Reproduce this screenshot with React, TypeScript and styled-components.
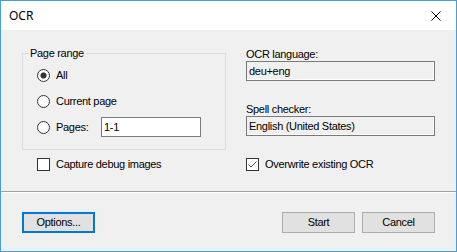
import React from "react";
import styled, { createGlobalStyle } from "styled-components";

const GlobalStyle = createGlobalStyle`
  html, body {
    margin: 0;
    padding: 0;
    background: #f0f0f0;
  }
  * {
    box-sizing: border-box;
  }
`;

const Window = styled.div`
  width: 457px;
  height: 252px;
  border: 1px solid #43a0d9;
  background: #f0f0f0;
  display: flex;
  flex-direction: column;
  font-family: "Liberation Sans", Arial, sans-serif;
  font-size: 11px;
  letter-spacing: -0.3px;
  color: #000;
`;

const TitleBar = styled.div`
  height: 29px;
  flex: none;
  background: #fff;
  display: flex;
  align-items: center;
  justify-content: space-between;
  padding-left: 8px;
`;

const Title = styled.span`
  font-family: "Noto Sans", "Open Sans", sans-serif;
  font-size: 12px;
  letter-spacing: 0;
  line-height: 16px;
  margin-top: 1px;
`;

const CloseButton = styled.div`
  width: 46px;
  height: 29px;
  display: flex;
  align-items: center;
  justify-content: center;
  padding-left: 6px;
`;

const Content = styled.div`
  flex: 1;
  display: flex;
  flex-direction: column;
`;

const Columns = styled.div`
  display: flex;
  gap: 20px;
  padding: 0 21px;
`;

const LeftColumn = styled.div`
  width: 204px;
  flex: none;
`;

const RightColumn = styled.div`
  width: 189px;
  flex: none;
  display: flex;
  flex-direction: column;
`;

const Group = styled.fieldset`
  margin: 17px 0 0 0;
  padding: 2px 0 9px 14px;
  border: 1px solid #dcdcdc;
  min-width: 0;
`;

const Legend = styled.legend`
  padding: 0 2px 0 1px;
  margin-left: -8px;
  line-height: 13px;
`;

const OptionRow = styled.div`
  height: 26px;
  display: flex;
  align-items: center;
`;

const Radio = styled.span<{ $checked?: boolean }>`
  width: 13px;
  height: 13px;
  flex: none;
  border-radius: 50%;
  border: 1px solid #333;
  background: ${(p) =>
    p.$checked ? "radial-gradient(circle, #333 0 2.7px, #fff 3.4px)" : "#fff"};
`;

const OptionLabel = styled.span<{ $width?: number }>`
  margin-left: 6px;
  line-height: 13px;
  width: ${(p) => (p.$width ? `${p.$width}px` : "auto")};
`;

const TextBox = styled.div<{ $readOnly?: boolean }>`
  height: 20px;
  display: flex;
  align-items: center;
  padding-left: 2px;
  line-height: 13px;
  border: 1px solid #7a7a7a;
  background: ${(p) => (p.$readOnly ? "#f0f0f0" : "#fff")};
  box-shadow: ${(p) => (p.$readOnly ? "inset -1px -1px 0 #fff" : "none")};
`;

const PagesBox = styled(TextBox)`
  width: 100px;
`;

const FieldLabel = styled.div<{ $top: number }>`
  margin-top: ${(p) => p.$top}px;
  height: 13px;
  line-height: 13px;
`;

const CheckRow = styled.div`
  display: flex;
  gap: 20px;
  padding: 0 21px;
  margin-top: 8px;
`;

const CheckCell = styled.div<{ $width: number; $indent?: number }>`
  width: ${(p) => p.$width}px;
  padding-left: ${(p) => p.$indent ?? 0}px;
  display: flex;
  align-items: center;
  height: 13px;
`;

const CheckBox = styled.span`
  width: 13px;
  height: 13px;
  flex: none;
  border: 1px solid #333;
  background: #fff;
  display: flex;
  align-items: center;
  justify-content: center;
`;

const Separator = styled.div`
  margin-top: 20px;
  height: 2px;
  border-top: 1px solid #a0a0a0;
  border-bottom: 1px solid #fff;
`;

const ButtonRow = styled.div`
  margin-top: 19px;
  padding: 0 21px;
  display: flex;
  align-items: center;
`;

const Button = styled.div<{ $focused?: boolean }>`
  width: 73px;
  height: 21px;
  display: flex;
  align-items: center;
  justify-content: center;
  background: #e1e1e1;
  border: ${(p) => (p.$focused ? "2px solid #0078d7" : "1px solid #adadad")};
  line-height: 13px;
`;

const Spacer = styled.div`
  flex: 1;
`;

const ButtonGap = styled.div`
  width: 7px;
`;

function CheckMark(): React.ReactElement {
  return (
    <svg width="11" height="11" viewBox="0 0 11 11">
      <path d="M1.5 5.5 L4 8 L9.5 2.5" fill="none" stroke="#444" strokeWidth="1" />
    </svg>
  );
}

function App(): React.ReactElement {
  return (
    <>
      <GlobalStyle />
      <Window>
        <TitleBar>
          <Title>OCR</Title>
          <CloseButton>
            <svg width="10" height="10" viewBox="0 0 10 10">
              <path d="M0.5 0.5 L9.5 9.5 M9.5 0.5 L0.5 9.5" stroke="#000" strokeWidth="1" />
            </svg>
          </CloseButton>
        </TitleBar>
        <Content>
          <Columns>
            <LeftColumn>
              <Group>
                <Legend>Page range</Legend>
                <OptionRow>
                  <Radio $checked />
                  <OptionLabel>All</OptionLabel>
                </OptionRow>
                <OptionRow>
                  <Radio />
                  <OptionLabel>Current page</OptionLabel>
                </OptionRow>
                <OptionRow>
                  <Radio />
                  <OptionLabel $width={45}>Pages:</OptionLabel>
                  <PagesBox>1-1</PagesBox>
                </OptionRow>
              </Group>
            </LeftColumn>
            <RightColumn>
              <FieldLabel $top={18}>OCR language:</FieldLabel>
              <TextBox $readOnly>deu+eng</TextBox>
              <FieldLabel $top={22}>Spell checker:</FieldLabel>
              <TextBox $readOnly>English (United States)</TextBox>
            </RightColumn>
          </Columns>
          <CheckRow>
            <CheckCell $width={204} $indent={15}>
              <CheckBox />
              <OptionLabel>Capture debug images</OptionLabel>
            </CheckCell>
            <CheckCell $width={189}>
              <CheckBox>
                <CheckMark />
              </CheckBox>
              <OptionLabel>Overwrite existing OCR</OptionLabel>
            </CheckCell>
          </CheckRow>
          <Separator />
          <ButtonRow>
            <Button $focused>Options...</Button>
            <Spacer />
            <Button>Start</Button>
            <ButtonGap />
            <Button>Cancel</Button>
          </ButtonRow>
        </Content>
      </Window>
    </>
  );
}

export default App;
